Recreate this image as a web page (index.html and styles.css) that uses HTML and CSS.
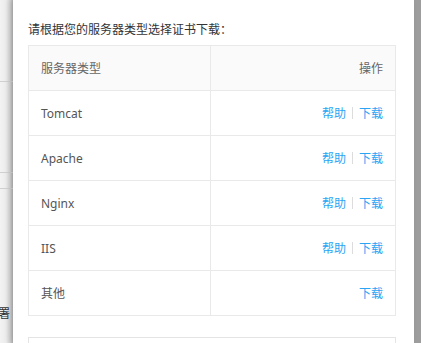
FILE: index.html
```html
<!DOCTYPE html>
<html lang="zh-CN">
<head>
    <meta charset="UTF-8">
    <meta name="viewport" content="width=device-width, initial-scale=1.0">
    <title>证书下载</title>
    <link rel="stylesheet" href="styles.css">
</head>
<body>

    <div class="page">
        <div class="backdrop">
            <div class="bg-row bg-first"></div>
            <div class="bg-row bg-mid"></div>
            <div class="bg-row bg-short"></div>
            <div class="bg-text">部署</div>
        </div>

        <div class="drawer">
            <p class="tip">请根据您的服务器类型选择证书下载：</p>

            <table class="server-table">
                <thead>
                    <tr>
                        <th class="col-name">服务器类型</th>
                        <th class="col-action">操作</th>
                    </tr>
                </thead>
                <tbody>
                    <tr>
                        <td>Tomcat</td>
                        <td class="col-action"><a href="#">帮助</a><span class="sep"></span><a href="#">下载</a></td>
                    </tr>
                    <tr>
                        <td>Apache</td>
                        <td class="col-action"><a href="#">帮助</a><span class="sep"></span><a href="#">下载</a></td>
                    </tr>
                    <tr>
                        <td>Nginx</td>
                        <td class="col-action"><a href="#">帮助</a><span class="sep"></span><a href="#">下载</a></td>
                    </tr>
                    <tr>
                        <td>IIS</td>
                        <td class="col-action"><a href="#">帮助</a><span class="sep"></span><a href="#">下载</a></td>
                    </tr>
                    <tr>
                        <td>其他</td>
                        <td class="col-action"><a href="#">下载</a></td>
                    </tr>
                </tbody>
            </table>

            <div class="next-box"></div>
        </div>

        <div class="scrollbar"></div>
    </div>

</body>
</html>
```

FILE: styles.css
```css
html,
body {
    margin: 0;
    padding: 0;
    width: 421px;
    height: 343px;
    overflow: hidden;
    background-color: #fff;
    font-family: "Noto Sans", "Noto Sans CJK SC", sans-serif;
    font-size: 12px;
}

.page {
    display: flex;
    height: 343px;
}

.backdrop {
    width: 13px;
    flex-shrink: 0;
    overflow: hidden;
    background: linear-gradient(to right, #f3f3f3 0%, #ececec 45%, #d6d6d6 75%, #b4b4b4 100%);
}

.bg-row {
    border-bottom: 1px solid #d0d0d0;
}

.bg-first {
    height: 81px;
}

.bg-mid {
    height: 90px;
}

.bg-short {
    height: 15px;
}

.bg-text {
    margin-top: 117px;
    display: flex;
    justify-content: flex-end;
    width: 10px;
    white-space: nowrap;
    color: #333;
    font-size: 12px;
    line-height: 16px;
}

.drawer {
    flex: 1;
    position: relative;
    z-index: 1;
    padding: 20px 18px 0 15px;
    background-color: #fff;
    box-shadow: -3px 0 6px rgba(0, 0, 0, 0.12);
}

.tip {
    margin: 0 0 5px;
    line-height: 20px;
    color: #333;
}

.server-table {
    width: 368px;
    border-collapse: collapse;
    table-layout: fixed;
}

.server-table th,
.server-table td {
    height: 45px;
    padding: 0 12px;
    border: 1px solid #e9e9e9;
    font-weight: normal;
    color: #555;
    text-align: left;
    box-sizing: border-box;
}

.server-table th {
    background-color: #fafafa;
    color: #666;
}

.col-name {
    width: 182px;
}

.server-table .col-action {
    text-align: right;
}

.server-table a {
    color: #2aa4f4;
    text-decoration: none;
}

.sep {
    display: inline-block;
    width: 1px;
    height: 12px;
    margin: 0 6px;
    vertical-align: -1px;
    background-color: #dcdcdc;
}

.next-box {
    margin-top: 21px;
    width: 368px;
    height: 30px;
    border: 1px solid #e4e4e4;
    box-sizing: border-box;
}

.scrollbar {
    width: 7px;
    flex-shrink: 0;
    background-color: #9d9d9d;
}
```
